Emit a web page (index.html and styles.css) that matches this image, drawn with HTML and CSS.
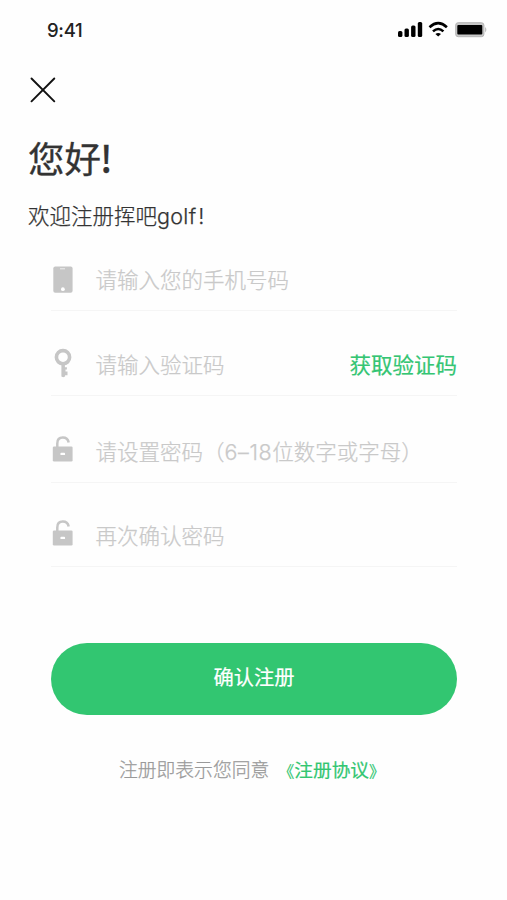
FILE: index.html
```html
<!DOCTYPE html>
<html lang="zh-CN">
<head>
<meta charset="utf-8">
<title>注册</title>
<link rel="stylesheet" href="styles.css">
</head>
<body>
<main class="screen">
  <header class="status">
    <span class="time">9:41</span>
    <svg class="indicators" width="90" height="20" viewBox="0 0 90 20">
      <rect x="1" y="11" width="4.4" height="6" rx="1.5"/>
      <rect x="7.5" y="8.5" width="4.4" height="8.5" rx="1.5"/>
      <rect x="14.1" y="5.5" width="4.4" height="11.5" rx="1.5"/>
      <rect x="20.8" y="2" width="4.4" height="15" rx="1.5"/>
      <path class="wave" d="M32.5 7.2Q41.2-.8 49.9 7.2M36 11.4Q41.2 6.6 46.4 11.4"/>
      <path d="M38.4 13.9Q41.2 11.9 44 13.9L41.2 16.5Z"/>
      <rect class="shell" x="58.7" y="2.7" width="28.2" height="14" rx="2.5"/>
      <path class="cap" d="M88.2 7Q90.5 9.7 88.2 12.4Z"/>
      <rect x="60.3" y="5" width="25" height="9.4" rx="1"/>
    </svg>
  </header>
  <svg class="close" width="26" height="26" viewBox="0 0 26 26"><path d="M1.5 1.5 24.3 24.3M24.3 1.5 1.5 24.3"/></svg>
  <h1 class="title">您好<span class="mark">!</span></h1>
  <p class="subtitle">欢迎注册挥吧<span class="latin">golf<span class="bang">!</span></span></p>
  <form class="form">
    <label class="field">
      <svg class="icon" width="24" height="32" viewBox="0 0 24 32"><rect x="2.3" y="3.5" width="19.3" height="26.3" rx="2"/><path class="slot" d="M9 5.8h5"/><circle class="hole" cx="11.9" cy="26.2" r="1.9"/></svg>
      <span class="hint">请输入您的手机号码</span>
    </label>
    <label class="field">
      <svg class="icon" width="24" height="32" viewBox="0 0 24 32"><circle class="ring" cx="12" cy="9.2" r="6.6"/><path d="M10.4 15.5h3.5v3.7h2v2.3h-1.4v2h2v3.8h-2.4v1.1l-1.9.8-1.8-.8Z"/></svg>
      <span class="hint">请输入验证码</span>
      <span class="code">获取验证码</span>
    </label>
    <label class="field tall">
      <svg class="icon" width="24" height="32" viewBox="0 0 24 32"><path class="shackle" d="M6.3 14V8.5Q6.3 2.6 11.8 2.6Q16.7 2.6 17.7 7.5"/><rect x="1.8" y="11.5" width="19.8" height="15" rx="1.3"/><rect class="hole" x="9.4" y="17.8" width="4.7" height="2.3" rx=".9"/></svg>
      <span class="hint">请设置密码（<span class="num">6–18</span>位数字或字母）</span>
    </label>
    <label class="field">
      <svg class="icon" width="24" height="32" viewBox="0 0 24 32"><path class="shackle" d="M6.3 14V8.5Q6.3 2.6 11.8 2.6Q16.7 2.6 17.7 7.5"/><rect x="1.8" y="11.5" width="19.8" height="15" rx="1.3"/><rect class="hole" x="9.4" y="17.8" width="4.7" height="2.3" rx=".9"/></svg>
      <span class="hint">再次确认密码</span>
    </label>
    <button class="submit" type="button">确认注册</button>
  </form>
  <p class="terms">注册即表示您同意<a class="link"><span class="bracket">《</span>注册协议<span class="bracket">》</span></a></p>
</main>
</body>
</html>
```
FILE: styles.css
```css
* { box-sizing: border-box; }
body { margin: 0; background: #fefefe; font-family: "Noto Sans CJK SC", sans-serif; color: #333; }
.screen { width: 507px; height: 900px; }
.status { height: 60px; padding: 0 20px 0 47px; display: flex; align-items: center; justify-content: space-between; }
.time { font: 500 18.5px/24px Inter, sans-serif; letter-spacing: -.3px; color: #222; }
.indicators { overflow: visible; }
.wave { fill: none; stroke: #000; stroke-width: 2.6; }
.shell { fill: #c8c8c8; stroke: #b5b5b5; stroke-width: 1; }
.cap { fill: #b5b5b5; }
.close { display: block; margin: 17px 0 0 30px; fill: none; stroke: #111; stroke-width: 1.9; stroke-linecap: round; }
.title { margin: 29px 0 0 28px; font-size: 36.5px; line-height: 52px; font-weight: 400; -webkit-text-stroke: .3px #333; }
.mark { margin-left: -1px; font-weight: 500; }
.subtitle { margin: 15px 0 0 28px; font-size: 21.5px; line-height: 32px; font-weight: 300; color: #333; -webkit-text-stroke: .25px #333; }
.latin { font-family: Inter, sans-serif; letter-spacing: .3px; }
.bang { margin-left: 2px; }
.form { margin: 16px 50px 0 51px; }
.field { display: flex; align-items: center; height: 84.5px; padding-top: 22px; border-bottom: 1px solid #f5f5f5; }
.field:first-child { height: 63px; padding-top: 0; }
.field.tall { height: 87px; padding-top: 25px; }
.icon { flex: none; fill: #c6c6c6; }
.slot { stroke: #eee; stroke-width: 1; }
.hole { fill: #fff; }
.ring { fill: none; stroke: #c6c6c6; stroke-width: 3.6; }
.shackle { fill: none; stroke: #c6c6c6; stroke-width: 2.5; }
.hint { margin: 0 0 0 20.5px; font-size: 21.5px; line-height: 32px; font-weight: 300; color: #c9c9c9; -webkit-text-stroke: .25px #c9c9c9; white-space: nowrap; }
.num { font-family: Inter, sans-serif; font-size: 21.5px; letter-spacing: .6px; }
.code { margin: 0 0 0 auto; font-size: 21.5px; line-height: 32px; color: #34c573; -webkit-text-stroke: .2px #34c573; white-space: nowrap; }
.submit { display: block; width: 100%; height: 72px; margin-top: 76px; padding: 0 0 6px; border: 0; border-radius: 36px; background: #32c671; color: #fff; font: 400 20.3px/30px "Noto Sans CJK SC", sans-serif; -webkit-text-stroke: .2px #fff; }
.terms { margin: 40px 0 0 119px; font-size: 18.8px; line-height: 28px; font-weight: 300; color: #999; -webkit-text-stroke: .25px #999; white-space: nowrap; }
.link { margin-left: 9px; font-size: 18.7px; font-weight: 400; color: #32c671; -webkit-text-stroke: .2px #32c671; }
.bracket { font-size: 16px; }
```
